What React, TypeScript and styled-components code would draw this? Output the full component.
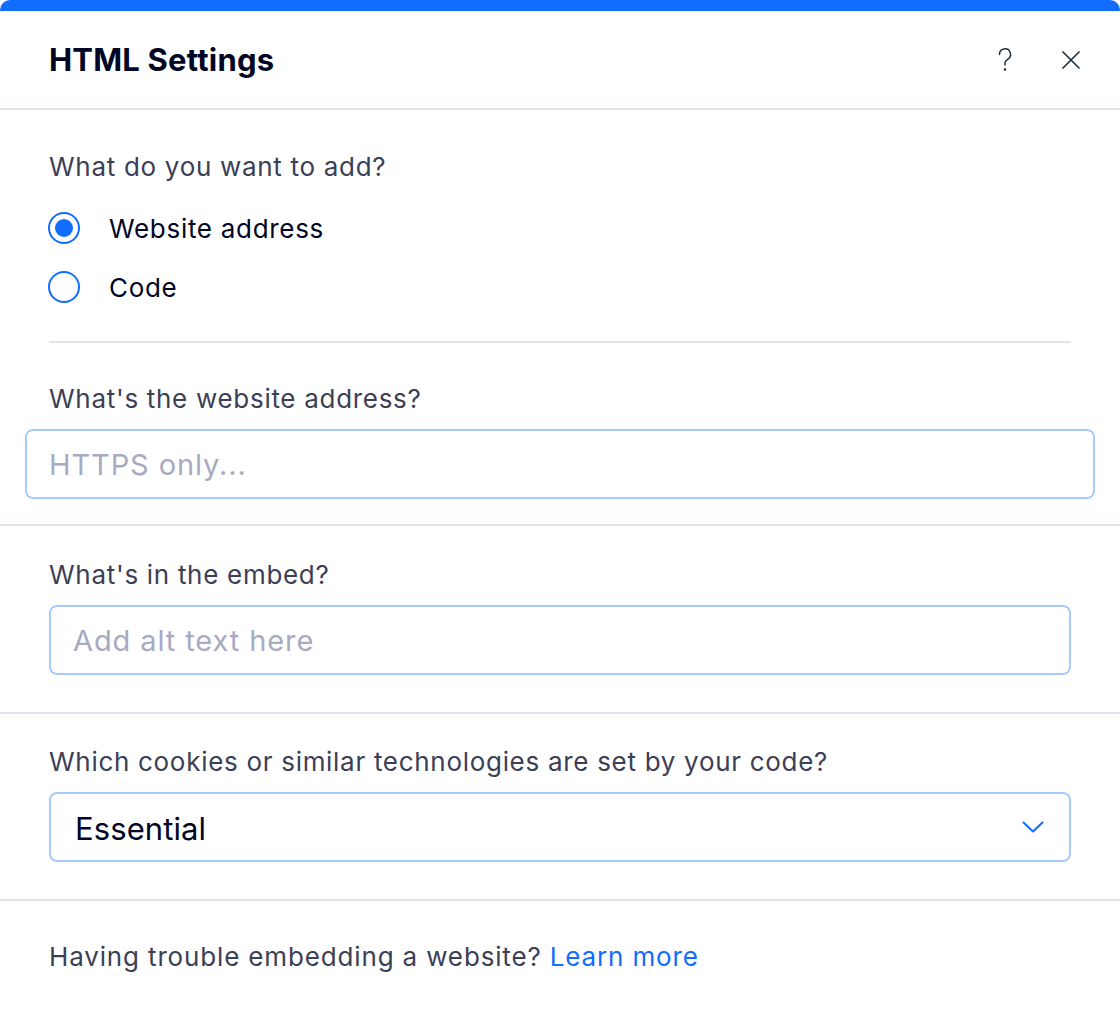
import React, { FC } from 'react';
import styled, { createGlobalStyle } from 'styled-components';

const GlobalStyle = createGlobalStyle`
  html, body {
    margin: 0;
    padding: 0;
    background: #ffffff;
  }
  * {
    box-sizing: border-box;
  }
`;

const Dialog = styled.div`
  width: 1120px;
  height: 1010px;
  background: #ffffff;
  border-top: 11px solid #116dff;
  border-radius: 10px;
  overflow: hidden;
  font-family: 'Inter', 'Noto Sans', sans-serif;
  color: #3b4057;
`;

const Header = styled.div`
  height: 99px;
  padding: 0 39px 0 49px;
  display: flex;
  align-items: center;
  border-bottom: 2px solid #dfe5eb;
`;

const Title = styled.h1`
  flex: 1;
  margin: 0;
  font-size: 31px;
  font-weight: 700;
  color: #000624;
  letter-spacing: 0.2px;
`;

const HeaderActions = styled.div`
  display: flex;
  align-items: center;
  gap: 48px;
`;

const IconButton = styled.button`
  border: 0;
  background: none;
  padding: 0;
  display: flex;
  align-items: center;
  justify-content: center;
  color: #20303c;
  cursor: pointer;
`;

const Section = styled.div<{ top: number; bottom: number; bordered?: boolean }>`
  padding: ${({ top, bottom }) => `${top}px 49px ${bottom}px`};
  border-bottom: ${({ bordered }) => (bordered ? '2px solid #dfe5eb' : 'none')};
`;

const Label = styled.div`
  font-size: 26px;
  line-height: 32px;
  letter-spacing: 0.7px;
  color: #3b4057;
`;

const RadioList = styled.div`
  display: flex;
  flex-direction: column;
  gap: 23px;
  margin-top: 27px;
`;

const RadioRow = styled.label`
  display: flex;
  align-items: center;
  gap: 29px;
  height: 36px;
  font-size: 26px;
  letter-spacing: 0.7px;
  color: #000624;
  cursor: pointer;
`;

const RadioCircle = styled.span<{ checked?: boolean }>`
  width: 32px;
  height: 32px;
  margin-left: -1px;
  border-radius: 50%;
  border: 2px solid #116dff;
  display: flex;
  align-items: center;
  justify-content: center;
  &::after {
    content: '';
    width: 18px;
    height: 18px;
    border-radius: 50%;
    background: ${({ checked }) => (checked ? '#116dff' : 'transparent')};
  }
`;

const Divider = styled.hr`
  margin: 0;
  border: 0;
  height: 2px;
  background: #dfe5eb;
`;

const Field = styled.div<{ wide?: boolean }>`
  margin: ${({ wide }) => (wide ? '14px -24px 0' : '14px 0 0')};
  height: 70px;
  border: 2px solid #a8caff;
  border-radius: 8px;
  display: flex;
  align-items: center;
  padding: 0 25px 0 22px;
`;

const Placeholder = styled.span`
  font-size: 29px;
  letter-spacing: 0.9px;
  color: #a8aac1;
  flex: 1;
`;

const SelectValue = styled.span`
  font-size: 31px;
  letter-spacing: 0.1px;
  color: #000624;
  flex: 1;
  padding-left: 2px;
  margin-top: 2px;
`;

const Footer = styled.div`
  padding: 40px 49px 0;
  font-size: 26px;
  line-height: 32px;
  letter-spacing: 0.85px;
  color: #3b4057;
`;

const Link = styled.a`
  color: #116dff;
  text-decoration: none;
`;

const HelpIcon: FC = () => (
  <svg width="16" height="26" viewBox="0 0 16 26" fill="none" stroke="currentColor" strokeWidth="1.5" strokeLinecap="round">
    <path d="M2.5 7.5a5.5 5.5 0 1 1 8 4.8c-1.6.9-2.5 2-2.5 3.8v2" />
    <circle cx="8" cy="22.5" r="0.6" fill="currentColor" />
  </svg>
);

const CloseIcon: FC = () => (
  <svg width="20" height="20" viewBox="0 0 20 20" fill="none" stroke="currentColor" strokeWidth="1.7" strokeLinecap="round">
    <path d="M2 2l16 16M18 2L2 18" />
  </svg>
);

const ChevronIcon: FC = () => (
  <svg width="22" height="12" viewBox="0 0 22 12" fill="none" stroke="#116dff" strokeWidth="2" strokeLinecap="round" strokeLinejoin="round">
    <path d="M1.5 1.5L11 10.5l9.5-9" />
  </svg>
);

const App: FC = () => {
  return (
    <>
      <GlobalStyle />
      <Dialog>
        <Header>
          <Title>HTML Settings</Title>
          <HeaderActions>
            <IconButton aria-label="Help">
              <HelpIcon />
            </IconButton>
            <IconButton aria-label="Close">
              <CloseIcon />
            </IconButton>
          </HeaderActions>
        </Header>

        <Section top={41} bottom={36}>
          <Label>What do you want to add?</Label>
          <RadioList>
            <RadioRow>
              <RadioCircle checked />
              Website address
            </RadioRow>
            <RadioRow>
              <RadioCircle />
              Code
            </RadioRow>
          </RadioList>
        </Section>
        <Section top={0} bottom={0}>
          <Divider />
        </Section>

        <Section top={40} bottom={25} bordered>
          <Label>What's the website address?</Label>
          <Field wide>
            <Placeholder>HTTPS only...</Placeholder>
          </Field>
        </Section>

        <Section top={33} bottom={37} bordered>
          <Label>What's in the embed?</Label>
          <Field>
            <Placeholder>Add alt text here</Placeholder>
          </Field>
        </Section>

        <Section top={32} bottom={37} bordered>
          <Label>Which cookies or similar technologies are set by your code?</Label>
          <Field>
            <SelectValue>Essential</SelectValue>
            <ChevronIcon />
          </Field>
        </Section>

        <Footer>
          Having trouble embedding a website? <Link href="#">Learn more</Link>
        </Footer>
      </Dialog>
    </>
  );
};

export default App;
